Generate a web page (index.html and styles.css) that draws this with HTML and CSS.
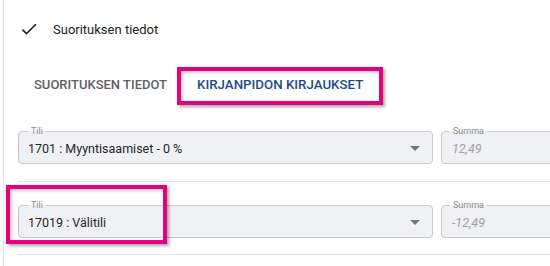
FILE: index.html
```html
<!DOCTYPE html>
<html lang="fi">
<head>
<meta charset="utf-8">
<link rel="stylesheet" href="styles.css">
</head>
<body>
<div class="panel">
  <div class="step">
    <svg class="check" width="20" height="20" viewBox="0 0 24 24"><path d="M9 16.17L4.83 12l-1.42 1.41L9 19 21 7l-1.41-1.41z" fill="#222"/></svg>
    <span class="step-title">Suorituksen tiedot</span>
  </div>
  <div class="tabs">
    <div class="tab">SUORITUKSEN TIEDOT</div>
    <div class="tab active">KIRJANPIDON KIRJAUKSET</div>
  </div>
  <div class="row">
    <div class="field account">
      <span class="label">Tili</span>
      <span class="value">1701 : Myyntisaamiset - 0 %</span>
      <span class="caret"></span>
    </div>
    <div class="field sum">
      <span class="label">Summa</span>
      <span class="value muted">12,49</span>
    </div>
  </div>
  <div class="row">
    <div class="field account">
      <span class="label">Tili</span>
      <span class="value">17019 : Välitili</span>
      <span class="caret"></span>
    </div>
    <div class="field sum">
      <span class="label">Summa</span>
      <span class="value muted">-12,49</span>
    </div>
  </div>
</div>
<div class="highlight hl-tab"></div>
<div class="highlight hl-field"></div>
</body>
</html>
```
FILE: styles.css
```css
html, body {
  margin: 0;
  padding: 0;
  background: #fff;
}
body {
  width: 550px;
  height: 266px;
  overflow: hidden;
  position: relative;
  font-family: Roboto, "Liberation Sans", sans-serif;
  color: #222;
}
.panel {
  margin-left: 3px;
  border-left: 1px solid #e2e2e2;
  height: 266px;
  padding-left: 14px;
}
.step {
  height: 58px;
  display: flex;
  align-items: center;
}
.check {
  margin-left: 1px;
  margin-right: 14px;
}
.step-title {
  font-size: 13px;
  color: #222;
}
.tabs {
  margin-top: 3px;
  height: 48px;
  display: flex;
  align-items: center;
}
.tab {
  padding: 0 16px;
  font-size: 13px;
  font-weight: 500;
  color: #606060;
  line-height: 48px;
}
.tab.active {
  color: #1d4d86;
  padding-left: 14px;
  font-size: 13.3px;
}
.row {
  display: flex;
  gap: 8px;
  padding: 22px 0 17px;
  border-bottom: 1px solid #e4e4e4;
  margin-right: -20px;
}
.row + .row {
  padding-top: 23px;
  padding-bottom: 16px;
}
.field {
  height: 33px;
  box-sizing: border-box;
  border: 1px solid #c9c9cc;
  border-radius: 4px;
  background: #f0f1f5;
  padding: 0 12px 0 9px;
  display: flex;
  align-items: center;
  position: relative;
}
.label {
  position: absolute;
  left: 9px;
  top: -7px;
  font-size: 9px;
  line-height: 12px;
  color: #8a8a8a;
  padding: 0 3px;
  background: linear-gradient(#fff 0 6px, #f0f1f5 6px);
}
.account {
  width: 415px;
}
.sum {
  flex: 1;
  padding-left: 10px;
}
.sum .label {
  left: 8px;
}
.value {
  font-size: 12.5px;
  color: #262626;
  flex: 1;
  margin-top: 1px;
}
.value.muted {
  color: #a0a0a0;
  font-style: italic;
}
.caret {
  width: 0;
  height: 0;
  border-left: 5px solid transparent;
  border-right: 5px solid transparent;
  border-top: 5px solid #767676;
  margin-top: 1px;
}
.highlight {
  position: absolute;
  border: 4px solid #e5007e;
  box-sizing: border-box;
  box-shadow: 2px 2px 3px rgba(0,0,0,0.35), inset 2px 2px 3px rgba(0,0,0,0.2);
}
.hl-tab {
  left: 177px;
  top: 67px;
  width: 206px;
  height: 38px;
}
.hl-field {
  left: 6px;
  top: 185px;
  width: 161px;
  height: 59px;
}
```
